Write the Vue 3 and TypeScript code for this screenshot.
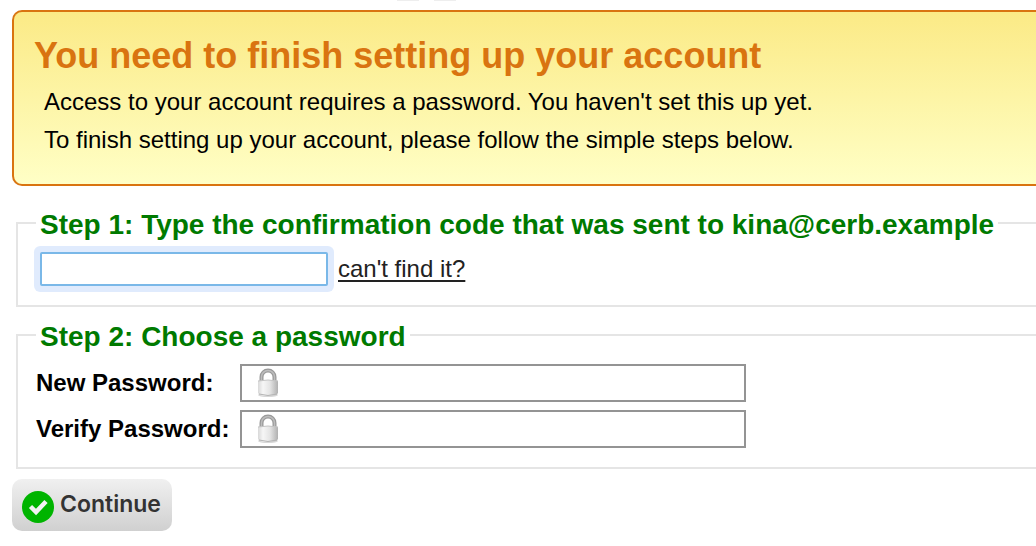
<script setup lang="ts">
import { ref } from 'vue'

interface PasswordField {
  id: string
  label: string
}

const email = 'kina@cerb.example'
const code = ref('')
const passwords = ref<Record<string, string>>({ password: '', verify: '' })
const fields: PasswordField[] = [
  { id: 'password', label: 'New Password:' },
  { id: 'verify', label: 'Verify Password:' },
]
</script>

<template>
  <main class="page">
    <div class="strip" aria-hidden="true"><span></span><span></span></div>

    <section class="notice">
      <h1>You need to finish setting up your account</h1>
      <p>Access to your account requires a password. You haven't set this up yet.</p>
      <p>To finish setting up your account, please follow the simple steps below.</p>
    </section>

    <form @submit.prevent>
      <fieldset class="step">
        <legend>Step 1: Type the confirmation code that was sent to {{ email }}</legend>
        <div class="code-row">
          <input v-model="code" class="code" type="text" aria-label="Confirmation code" />
          <a href="#">can't find it?</a>
        </div>
      </fieldset>

      <fieldset class="step">
        <legend>Step 2: Choose a password</legend>
        <div class="passwords">
          <template v-for="field in fields" :key="field.id">
            <label :for="field.id">{{ field.label }}</label>
            <div class="field">
              <svg class="lock" viewBox="0 0 24 30" aria-hidden="true">
                <defs>
                  <linearGradient :id="field.id + '-body'" x1="0" y1="0" x2="1" y2="0">
                    <stop offset="0" stop-color="#d8d8d8" />
                    <stop offset="0.25" stop-color="#f6f6f6" />
                    <stop offset="0.6" stop-color="#e4e4e4" />
                    <stop offset="1" stop-color="#b0b0b0" />
                  </linearGradient>
                </defs>
                <ellipse cx="12" cy="27" rx="10" ry="2" fill="#d8d8d8" />
                <path d="M5.500 15V9a6.500 6.500 0 0 1 13 0v6" fill="none" stroke="#999" stroke-width="4" />
                <path d="M5.500 15V9a6.500 6.500 0 0 1 13 0v6" fill="none" stroke="#bdbdbd" stroke-width="1.500" />
                <path d="M2 13Q12 11 22 13V25Q21 28 12 28T2 25Z" :fill="`url(#${field.id}-body)`" />
                <path d="M2 13Q12 11 22 13" fill="none" stroke="#c4c4c4" />
                <path d="M3 26Q12 29 21 26" fill="none" stroke="#b4b4b4" />
              </svg>
              <input :id="field.id" v-model="passwords[field.id]" type="password" />
            </div>
          </template>
        </div>
      </fieldset>

      <button type="submit">
        <svg viewBox="0 0 32 32" aria-hidden="true">
          <circle cx="16" cy="16" r="16" fill="#00b400" />
          <path d="M8.500 15.500L14 21L24 10.500" fill="none" stroke="#f2f2f2" stroke-width="4.500" />
        </svg>
        <span>Continue</span>
      </button>
    </form>
  </main>
</template>

<style>
body {
  margin: 0;
  background: #fff;
}
</style>

<style scoped>
.page {
  box-sizing: border-box;
  padding-left: 12px;
  overflow: hidden;
  color: #000;
  font-family: "Liberation Sans", Arial, sans-serif;
  font-size: 24px;
}

.strip {
  display: flex;
  gap: 15px;
  height: 10px;
  padding-left: 385px;
}

.strip span {
  width: 22px;
  height: 1px;
  background: #eee;
}

.notice {
  padding: 24px 20px 25px;
  border: 2px solid #d97410;
  border-right: 0;
  border-radius: 10px 0 0 10px;
  background: linear-gradient(#fbea86, #ffffc6);
}

h1 {
  margin: 0 0 7px;
  color: #d97410;
  font-size: 36px;
  line-height: 40px;
}

p {
  margin: 0 10px;
  line-height: 38px;
}

form {
  padding-top: 9px;
}

.step {
  min-width: 0;
  margin: 10px 0 0 4px;
  padding: 11px 18px 19px;
  border: 2px solid #e5e5e5;
  border-right: 0;
}

legend {
  padding: 4px 4px 0;
  color: #007a00;
  font-size: 28px;
  font-weight: bold;
  line-height: 32px;
}

.code-row {
  display: flex;
  align-items: center;
  gap: 10px;
  padding-left: 4px;
}

input {
  box-sizing: border-box;
  min-width: 0;
  border: 2px solid #949494;
  border-radius: 0;
  background: #fff;
  font: inherit;
  outline: none;
}

.code {
  width: 288px;
  height: 34px;
  border-color: #7ab8e8;
  border-radius: 2px;
  box-shadow: 0 0 0 6px #e0ebfd;
}

a {
  color: #222;
  text-decoration: underline;
  text-decoration-thickness: 2px;
  text-underline-offset: 3px;
}

.passwords {
  display: grid;
  grid-template-columns: 194px minmax(0, 506px);
  column-gap: 10px;
  row-gap: 8px;
  align-items: center;
}

label {
  font-weight: bold;
  white-space: nowrap;
}

.field {
  display: grid;
  align-items: center;
}

.field > * {
  grid-area: 1 / 1;
}

.field input {
  width: 100%;
  height: 38px;
  padding: 0 8px 0 44px;
}

.lock {
  z-index: 1;
  width: 24px;
  height: 30px;
  margin-left: 16px;
  pointer-events: none;
}

button {
  display: flex;
  align-items: center;
  gap: 6px;
  height: 52px;
  margin: 10px 0 0;
  padding: 4px 11px 0 10px;
  border: 0;
  border-radius: 10px;
  background: linear-gradient(#f0f0f0, #d0d0d0);
  color: #333;
  font-family: Inter, sans-serif;
  font-size: 23px;
  font-weight: 600;
}

button svg {
  width: 32px;
  height: 32px;
}

button span {
  padding-bottom: 7px;
}
</style>
